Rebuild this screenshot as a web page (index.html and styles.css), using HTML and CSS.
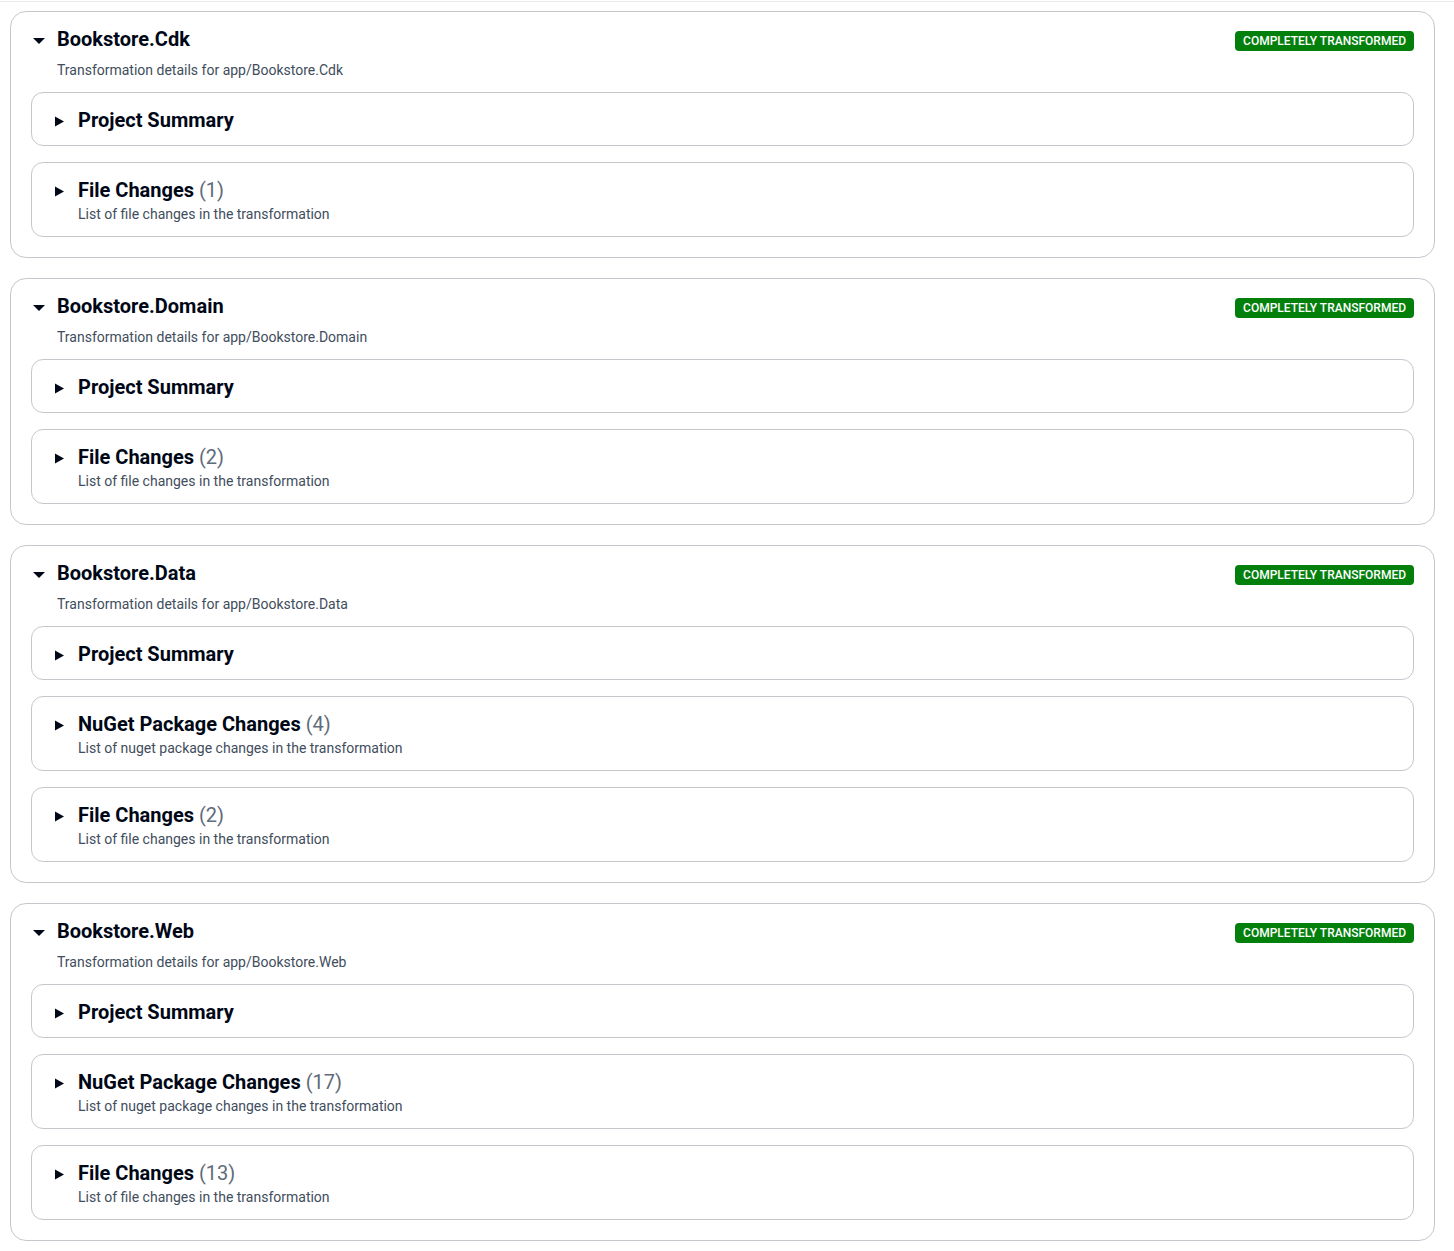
FILE: index.html
```html
<!DOCTYPE html>
<html lang="en">
<head>
    <meta charset="UTF-8">
    <meta name="viewport" content="width=device-width, initial-scale=1.0">
    <title>Transformation details</title>
    <link rel="stylesheet" href="styles.css">
</head>
<body>
    <div class="top-rule"></div>

    <main class="projects">
        <!-- Bookstore.Cdk -->
        <section class="project">
            <header class="project-header">
                <div class="project-heading">
                    <svg class="caret" viewBox="0 0 16 16"><polygon points="2,7 14,7 8,13"/></svg>
                    <h2>Bookstore.Cdk</h2>
                </div>
                <span class="badge">Completely transformed</span>
            </header>
            <p class="project-desc">Transformation details for app/Bookstore.Cdk</p>
            <div class="sections">
                <div class="section">
                    <div class="section-heading">
                        <svg class="caret" viewBox="0 0 16 16"><polygon points="3,3.5 12,8.5 3,13.5"/></svg>
                        <h3>Project Summary</h3>
                    </div>
                </div>
                <div class="section">
                    <div class="section-heading">
                        <svg class="caret" viewBox="0 0 16 16"><polygon points="3,3.5 12,8.5 3,13.5"/></svg>
                        <h3>File Changes <span class="count">(1)</span></h3>
                    </div>
                    <p class="section-desc">List of file changes in the transformation</p>
                </div>
            </div>
        </section>

        <!-- Bookstore.Domain -->
        <section class="project">
            <header class="project-header">
                <div class="project-heading">
                    <svg class="caret" viewBox="0 0 16 16"><polygon points="2,7 14,7 8,13"/></svg>
                    <h2>Bookstore.Domain</h2>
                </div>
                <span class="badge">Completely transformed</span>
            </header>
            <p class="project-desc">Transformation details for app/Bookstore.Domain</p>
            <div class="sections">
                <div class="section">
                    <div class="section-heading">
                        <svg class="caret" viewBox="0 0 16 16"><polygon points="3,3.5 12,8.5 3,13.5"/></svg>
                        <h3>Project Summary</h3>
                    </div>
                </div>
                <div class="section">
                    <div class="section-heading">
                        <svg class="caret" viewBox="0 0 16 16"><polygon points="3,3.5 12,8.5 3,13.5"/></svg>
                        <h3>File Changes <span class="count">(2)</span></h3>
                    </div>
                    <p class="section-desc">List of file changes in the transformation</p>
                </div>
            </div>
        </section>

        <!-- Bookstore.Data -->
        <section class="project">
            <header class="project-header">
                <div class="project-heading">
                    <svg class="caret" viewBox="0 0 16 16"><polygon points="2,7 14,7 8,13"/></svg>
                    <h2>Bookstore.Data</h2>
                </div>
                <span class="badge">Completely transformed</span>
            </header>
            <p class="project-desc">Transformation details for app/Bookstore.Data</p>
            <div class="sections">
                <div class="section">
                    <div class="section-heading">
                        <svg class="caret" viewBox="0 0 16 16"><polygon points="3,3.5 12,8.5 3,13.5"/></svg>
                        <h3>Project Summary</h3>
                    </div>
                </div>
                <div class="section">
                    <div class="section-heading">
                        <svg class="caret" viewBox="0 0 16 16"><polygon points="3,3.5 12,8.5 3,13.5"/></svg>
                        <h3>NuGet Package Changes <span class="count">(4)</span></h3>
                    </div>
                    <p class="section-desc">List of nuget package changes in the transformation</p>
                </div>
                <div class="section">
                    <div class="section-heading">
                        <svg class="caret" viewBox="0 0 16 16"><polygon points="3,3.5 12,8.5 3,13.5"/></svg>
                        <h3>File Changes <span class="count">(2)</span></h3>
                    </div>
                    <p class="section-desc">List of file changes in the transformation</p>
                </div>
            </div>
        </section>

        <!-- Bookstore.Web -->
        <section class="project">
            <header class="project-header">
                <div class="project-heading">
                    <svg class="caret" viewBox="0 0 16 16"><polygon points="2,7 14,7 8,13"/></svg>
                    <h2>Bookstore.Web</h2>
                </div>
                <span class="badge">Completely transformed</span>
            </header>
            <p class="project-desc">Transformation details for app/Bookstore.Web</p>
            <div class="sections">
                <div class="section">
                    <div class="section-heading">
                        <svg class="caret" viewBox="0 0 16 16"><polygon points="3,3.5 12,8.5 3,13.5"/></svg>
                        <h3>Project Summary</h3>
                    </div>
                </div>
                <div class="section">
                    <div class="section-heading">
                        <svg class="caret" viewBox="0 0 16 16"><polygon points="3,3.5 12,8.5 3,13.5"/></svg>
                        <h3>NuGet Package Changes <span class="count">(17)</span></h3>
                    </div>
                    <p class="section-desc">List of nuget package changes in the transformation</p>
                </div>
                <div class="section">
                    <div class="section-heading">
                        <svg class="caret" viewBox="0 0 16 16"><polygon points="3,3.5 12,8.5 3,13.5"/></svg>
                        <h3>File Changes <span class="count">(13)</span></h3>
                    </div>
                    <p class="section-desc">List of file changes in the transformation</p>
                </div>
            </div>
        </section>
    </main>
</body>
</html>
```

FILE: styles.css
```css
* {
    margin: 0;
    padding: 0;
    box-sizing: border-box;
}

body {
    font-family: Roboto, "Liberation Sans", sans-serif;
    color: #000716;
    background: #ffffff;
    padding: 0 19px 0 10px;
}

.top-rule {
    height: 1px;
    margin: 1px -19px 0 -10px;
    background: #e9ebed;
}

.projects {
    display: flex;
    flex-direction: column;
    gap: 20px;
    padding-top: 9px;
}

/* outer expandable container per project */
.project {
    border: 1px solid #c6c6cd;
    border-radius: 16px;
    padding: 15px 20px 20px;
}

.project-header {
    display: flex;
    justify-content: space-between;
    align-items: flex-start;
}

.project-heading {
    display: flex;
    align-items: center;
    gap: 10px;
}

.caret {
    width: 16px;
    height: 16px;
    flex-shrink: 0;
    fill: #000716;
}

.project-heading h2 {
    font-size: 20px;
    line-height: 24px;
    font-weight: 700;
}

.badge {
    margin-top: 4px;
    height: 20px;
    line-height: 20px;
    padding: 0 8px;
    border-radius: 4px;
    background: #037f0c;
    color: #ffffff;
    font-size: 12px;
    font-weight: 500;
    text-transform: uppercase;
    white-space: nowrap;
}

.project-desc {
    margin: 9px 0 0 26px;
    font-size: 14px;
    line-height: 20px;
    color: #414d5c;
}

.sections {
    display: flex;
    flex-direction: column;
    gap: 16px;
    margin-top: 12px;
}

/* nested collapsed sections */
.section {
    border: 1px solid #c6c6cd;
    border-radius: 12px;
    padding: 15px 20px 12px;
}

.section-heading {
    display: flex;
    align-items: center;
    gap: 10px;
}

.section-heading h3 {
    font-size: 20px;
    line-height: 25px;
    font-weight: 700;
}

.count {
    font-weight: 400;
    color: #5f6b7a;
}

.section-desc {
    margin: 1px 0 0 26px;
    font-size: 14px;
    line-height: 20px;
    color: #414d5c;
}
```
